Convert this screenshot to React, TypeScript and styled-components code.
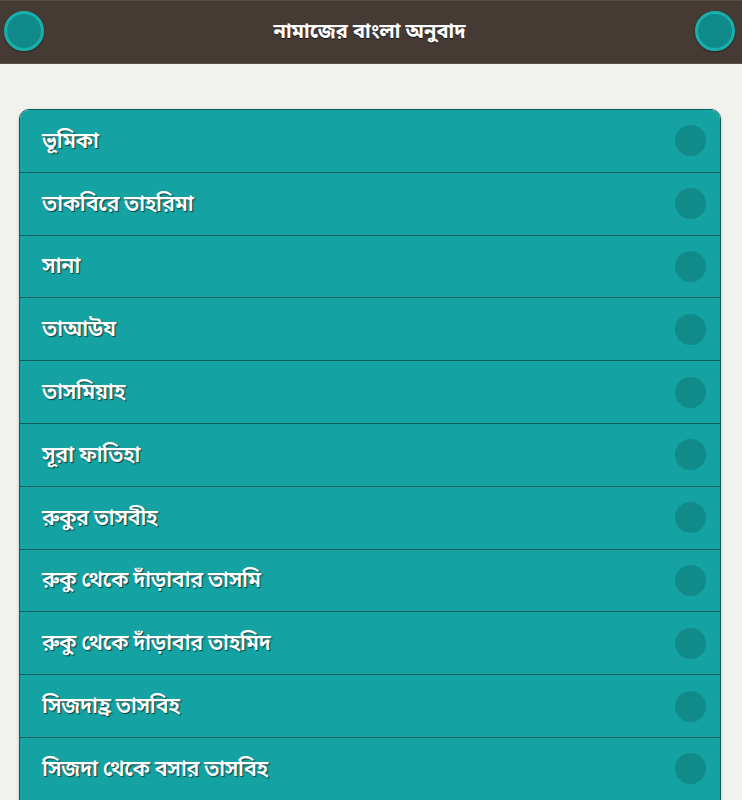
import React from "react";
import styled, { createGlobalStyle } from "styled-components";

const items = [
  "ভূমিকা",
  "তাকবিরে তাহরিমা",
  "সানা",
  "তাআউয",
  "তাসমিয়াহ",
  "সূরা ফাতিহা",
  "রুকুর তাসবীহ",
  "রুকু থেকে দাঁড়াবার তাসমি",
  "রুকু থেকে দাঁড়াবার তাহমিদ",
  "সিজদাহ্র তাসবিহ",
  "সিজদা থেকে বসার তাসবিহ",
];

const GlobalStyle = createGlobalStyle`
  html, body {
    margin: 0;
    padding: 0;
    background: #f1f1ed;
    font-family: "Noto Sans", "Noto Sans Bengali", "DejaVu Sans", sans-serif;
  }
`;

export default function App() {
  return (
    <>
      <GlobalStyle />
      <SPage>
        <SHeader>
          <SRoundButton aria-label="menu" />
          <STitle>নামাজের বাংলা অনুবাদ</STitle>
          <SRoundButton aria-label="options" />
        </SHeader>
        <SContent>
          <SList>
            {items.map((label) => (
              <SRow key={label}>
                <SLabel>{label}</SLabel>
                <SDot />
              </SRow>
            ))}
          </SList>
        </SContent>
      </SPage>
    </>
  );
}

const SPage = styled.div`
  width: 100%;
  height: 800px;
  overflow: hidden;
`;

const SHeader = styled.header`
  height: 64px;
  box-sizing: border-box;
  background: #453a34;
  border-top: 1px solid #564c46;
  border-bottom: 1px solid #5a514b;
  display: flex;
  align-items: center;
  justify-content: space-between;
  padding: 0 7px 0 4px;
`;

const SRoundButton = styled.button`
  width: 40px;
  height: 40px;
  border-radius: 50%;
  border: 3px solid #17b0ad;
  background: #108a89;
  box-shadow: 0 1px 2px rgba(0, 0, 0, 0.35);
  padding: 0;
  margin-top: -3px;
`;

const STitle = styled.h1`
  margin: 0 0 2px;
  color: #fff;
  font-size: 20px;
  font-weight: 700;
  text-shadow: 0 1px 0 #111;
`;

const SContent = styled.main`
  padding: 45px 21px 0 19px;
`;

const SList = styled.ul`
  list-style: none;
  margin: 0;
  padding: 0;
  border: 1px solid #0d5d5c;
  border-radius: 10px 10px 0 0;
  overflow: hidden;
  box-shadow: 0 1px 3px rgba(0, 0, 0, 0.25);
`;

const SRow = styled.li`
  height: 62.8px;
  box-sizing: border-box;
  background: #14a2a2;
  border-bottom: 1px solid #0d5d5c;
  display: flex;
  align-items: center;
  justify-content: space-between;
  padding: 0 14px 0 22px;
`;

const SLabel = styled.span`
  color: #fff;
  font-size: 21.5px;
  font-weight: 600;
  letter-spacing: -0.4px;
  text-shadow: 1px 1px 1px #0b3c3c;
`;

const SDot = styled.span`
  width: 31px;
  height: 31px;
  border-radius: 50%;
  background: #118a8a;
`;
